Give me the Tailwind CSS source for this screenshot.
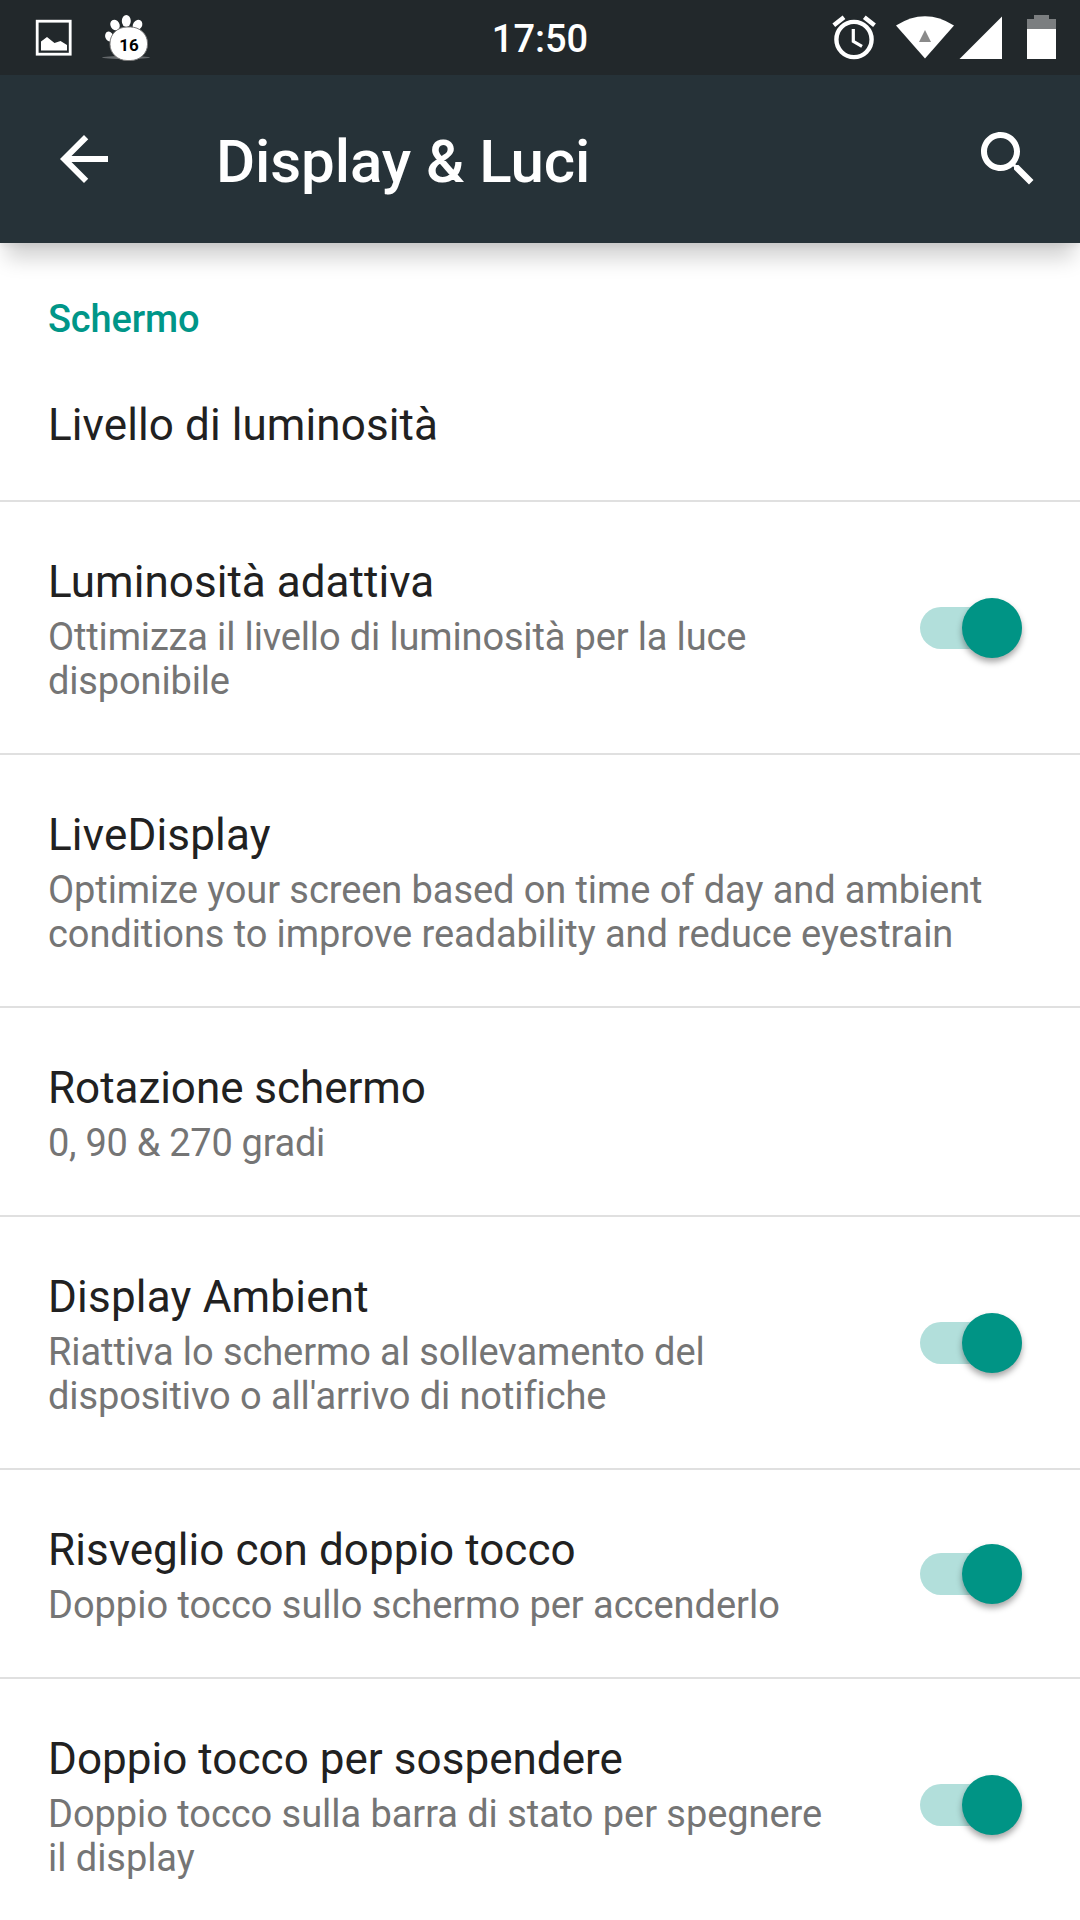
<!DOCTYPE html>
<html lang="it">
<head>
    <meta charset="UTF-8">
    <meta name="viewport" content="width=device-width, initial-scale=1.0">
    <title>Display &amp; Luci</title>
    <script src="https://cdn.jsdelivr.net/npm/@tailwindcss/browser@4"></script>
</head>
<body class="bg-white font-['Roboto',sans-serif]">
    <div class="w-[1080px] h-[1920px] overflow-hidden bg-white">

        <!-- Status bar -->
        <div class="grid grid-cols-3 items-center h-[75px] bg-[#22282b] text-white">
            <div class="flex h-[75px]">
                <svg class="ml-[35px] w-[38px] h-[75px]" viewBox="35 0 38 75">
                    <rect x="37.200" y="21.200" width="33" height="33" fill="none" stroke="#fff" stroke-width="2.800"/>
                    <path d="M41 50.500V41.500L47 37L54.500 43L60.500 41L67 45V50.500Z" fill="#fff"/>
                </svg>
                <svg class="ml-[28px] w-[52px] h-[75px]" viewBox="101 0 52 75">
                    <ellipse cx="126" cy="57.500" rx="24" ry="1.500" fill="#fff" fill-opacity=".3"/>
                    <g fill="#fff">
                        <ellipse cx="109.200" cy="36.500" rx="4" ry="5" transform="rotate(-20 109.200 36.500)"/>
                        <ellipse cx="115" cy="25" rx="4.500" ry="5.500" transform="rotate(-30 115 25)"/>
                        <ellipse cx="126.300" cy="21" rx="4.500" ry="6"/>
                        <ellipse cx="137.500" cy="25" rx="4.500" ry="5.500" transform="rotate(35 137.500 25)"/>
                        <rect x="110" y="27" width="37.500" height="33.500" rx="17" ry="16" stroke="#777" stroke-width="1"/>
                    </g>
                    <text x="129" y="50.700" text-anchor="middle" font-size="17" font-weight="700" fill="#000">16</text>
                </svg>
            </div>
            <div class="text-center text-[38px] leading-[72px] font-medium pt-[3px]">17:50</div>
            <div class="flex justify-end h-[75px]">
                <svg class="w-[44px] h-[75px]" viewBox="832 0 44 75" fill="none" stroke="#fff">
                    <circle cx="854" cy="39.500" r="17.600" stroke-width="4.400"/>
                    <path d="M853.300 29V41.300L862 46.300" stroke-width="3.200"/>
                    <path d="M833.800 25.300L844 17.300M864.300 17.300L874.500 25.300" stroke-width="4.500"/>
                </svg>
                <svg class="ml-[19px] w-[60px] h-[75px]" viewBox="895 0 60 75">
                    <path d="M896 25.500Q925 7 954 25.500L925 58.500Z" fill="#fff"/>
                    <path d="M925 30L931 42H919Z" fill="#8a8a8a"/>
                </svg>
                <svg class="ml-[4px] w-[44px] h-[75px]" viewBox="959 0 44 75">
                    <path d="M959.500 59H1002V16.500Z" fill="#fff"/>
                </svg>
                <svg class="ml-[24px] mr-[24px] w-[29px] h-[75px]" viewBox="1027 0 29 75">
                    <path d="M1027 29V19H1034V15H1049V19H1056V29Z" fill="#7b7e80"/>
                    <path d="M1027 29H1056V59H1027Z" fill="#fff"/>
                </svg>
            </div>
        </div>

        <!-- Toolbar -->
        <div class="relative flex items-center h-[168px] bg-[#263238] text-white shadow-[0_21px_20px_-6px_rgba(0,0,0,0.18),0_4px_5px_rgba(0,0,0,0.05)]">
            <svg class="ml-[48px] w-[72px] h-[72px]" viewBox="0 0 24 24" fill="#fff">
                <path d="M20 11H7.830l5.590-5.590L12 4l-8 8 8 8 1.410-1.410L7.830 13H20v-2z"/>
            </svg>
            <h1 class="ml-[96px] flex-1 text-[60px] leading-[70px] font-medium tracking-[-0.08px] pt-[6px]">Display &amp; Luci</h1>
            <svg class="mr-[36px] w-[72px] h-[72px]" viewBox="0 0 24 24" fill="#fff">
                <path d="M15.500 14h-.790l-.280-.270C15.410 12.590 16 11.110 16 9.500 16 5.910 13.090 3 9.500 3S3 5.910 3 9.500 5.910 16 9.500 16c1.610 0 3.090-.590 4.230-1.570l.270.280v.790l5 4.990L20.490 19l-4.990-5zm-6 0C7.010 14 5 11.990 5 9.500S7.010 5 9.500 5 14 7.010 14 9.500 11.990 14 9.500 14z"/>
            </svg>
        </div>

        <!-- Preference list -->
        <div class="text-[#212121]">
            <div class="h-[118px] pl-[48px] pt-[54px] text-[38px] leading-[44px] font-medium tracking-[-0.15px] text-[#009688]">Schermo</div>

            <div class="h-[141px] pl-[48px] pt-[38px] border-b-2 border-[#e0e0e0]">
                <h2 class="text-[44px] leading-[52px] tracking-[0.1px]">Livello di luminosità</h2>
            </div>

            <div class="flex items-center h-[253px] pl-[48px] pr-[58px] border-b-2 border-[#e0e0e0]">
                <div class="flex-1 pt-[4px]">
                    <h2 class="text-[44px] leading-[52px] tracking-[0.04px]">Luminosità adattiva</h2>
                    <p class="mt-[7px] text-[38px] leading-[44px] tracking-[-0.15px] text-[#757575]">Ottimizza il livello di luminosità per la luce<br>disponibile</p>
                </div>
                <div class="flex items-center justify-end w-[102px] h-[42px] rounded-full bg-[#b2dfdb]">
                    <div class="w-[60px] h-[60px] shrink-0 rounded-full bg-[#009485] shadow-[0_4px_6px_rgba(0,0,0,0.35)]"></div>
                </div>
            </div>

            <div class="flex items-center h-[253px] pl-[48px] pr-[58px] border-b-2 border-[#e0e0e0]">
                <div class="flex-1 pt-[4px]">
                    <h2 class="text-[44px] leading-[52px] tracking-[0.17px]">LiveDisplay</h2>
                    <p class="mt-[7px] text-[38px] leading-[44px] tracking-[-0.08px] text-[#757575]">Optimize your screen based on time of day and ambient<br>conditions to improve readability and reduce eyestrain</p>
                </div>
            </div>

            <div class="flex items-center h-[209px] pl-[48px] pr-[58px] border-b-2 border-[#e0e0e0]">
                <div class="flex-1 pt-[4px]">
                    <h2 class="text-[44px] leading-[52px] tracking-[-0.04px]">Rotazione schermo</h2>
                    <p class="mt-[7px] text-[38px] leading-[44px] tracking-[-0.28px] text-[#757575]">0, 90 &amp; 270 gradi</p>
                </div>
            </div>

            <div class="flex items-center h-[253px] pl-[48px] pr-[58px] border-b-2 border-[#e0e0e0]">
                <div class="flex-1 pt-[4px]">
                    <h2 class="text-[44px] leading-[52px] tracking-[0.2px]">Display Ambient</h2>
                    <p class="mt-[7px] text-[38px] leading-[44px] tracking-[-0.09px] text-[#757575]">Riattiva lo schermo al sollevamento del<br>dispositivo o all'arrivo di notifiche</p>
                </div>
                <div class="flex items-center justify-end w-[102px] h-[42px] rounded-full bg-[#b2dfdb]">
                    <div class="w-[60px] h-[60px] shrink-0 rounded-full bg-[#009485] shadow-[0_4px_6px_rgba(0,0,0,0.35)]"></div>
                </div>
            </div>

            <div class="flex items-center h-[209px] pl-[48px] pr-[58px] border-b-2 border-[#e0e0e0]">
                <div class="flex-1 pt-[4px]">
                    <h2 class="text-[44px] leading-[52px] tracking-[0.04px]">Risveglio con doppio tocco</h2>
                    <p class="mt-[7px] text-[38px] leading-[44px] tracking-[-0.03px] text-[#757575]">Doppio tocco sullo schermo per accenderlo</p>
                </div>
                <div class="flex items-center justify-end w-[102px] h-[42px] rounded-full bg-[#b2dfdb]">
                    <div class="w-[60px] h-[60px] shrink-0 rounded-full bg-[#009485] shadow-[0_4px_6px_rgba(0,0,0,0.35)]"></div>
                </div>
            </div>

            <div class="flex items-center h-[253px] pl-[48px] pr-[58px] border-b-2 border-[#e0e0e0]">
                <div class="flex-1 pt-[4px]">
                    <h2 class="text-[44px] leading-[52px] tracking-[0.04px]">Doppio tocco per sospendere</h2>
                    <p class="mt-[7px] text-[38px] leading-[44px] tracking-[-0.05px] text-[#757575]">Doppio tocco sulla barra di stato per spegnere<br>il display</p>
                </div>
                <div class="flex items-center justify-end w-[102px] h-[42px] rounded-full bg-[#b2dfdb]">
                    <div class="w-[60px] h-[60px] shrink-0 rounded-full bg-[#009485] shadow-[0_4px_6px_rgba(0,0,0,0.35)]"></div>
                </div>
            </div>
        </div>
    </div>
</body>
</html>
